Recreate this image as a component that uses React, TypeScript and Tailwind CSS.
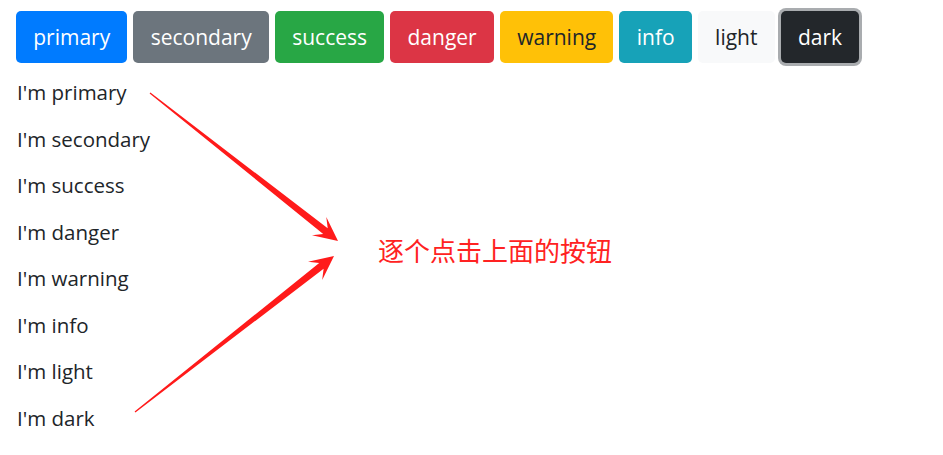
import React from "react";

type P = [number, number];

function arrowPoints(tail: P, tip: P): string {
  const dx = tip[0] - tail[0];
  const dy = tip[1] - tail[1];
  const len = Math.hypot(dx, dy);
  const ux = dx / len;
  const uy = dy / len;
  const px = -uy;
  const py = ux;
  const at = (along: number, perp: number): P => [
    tip[0] - ux * along + px * perp,
    tip[1] - uy * along + py * perp,
  ];
  const pts: P[] = [
    [tail[0] + px * 0.6, tail[1] + py * 0.6],
    at(16, 3.6),
    at(24, 11.5),
    [tip[0], tip[1]],
    at(24, -11.5),
    at(16, -3.6),
    [tail[0] - px * 0.6, tail[1] - py * 0.6],
  ];
  return pts.map((p) => `${p[0].toFixed(1)},${p[1].toFixed(1)}`).join(" ");
}

const buttons = [
  { label: "primary", cls: "bg-[#007bff] text-white" },
  { label: "secondary", cls: "bg-[#6c757d] text-white" },
  { label: "success", cls: "bg-[#28a745] text-white" },
  { label: "danger", cls: "bg-[#dc3545] text-white" },
  { label: "warning", cls: "bg-[#ffc107] text-[#212529]" },
  { label: "info", cls: "bg-[#17a2b8] text-white" },
  { label: "light", cls: "bg-[#f8f9fa] text-[#212529]" },
  { label: "dark", cls: "bg-[#23272b] text-white shadow-[0_0_0_3px_#a9acaf]" },
];

const lines = ["primary", "secondary", "success", "danger", "warning", "info", "light", "dark"];

export default function App() {
  return (
    <div
      className="relative w-[943px] h-[455px] bg-white overflow-hidden"
      style={{ fontFamily: '"Open Sans", "Noto Sans", sans-serif' }}
    >
      <div className="pl-[16px] pt-[11px]">
        <div className="flex gap-[6px]">
          {buttons.map((b) => (
            <button
              key={b.label}
              className={`h-[52px] px-[17.25px] rounded-[5px] text-[21px] leading-[30px] ${b.cls}`}
            >
              {b.label}
            </button>
          ))}
        </div>
        <div className="mt-[6px] flex flex-col text-[20.5px] text-[#212529]">
          {lines.map((l) => (
            <div key={l} className="leading-[46.5px] pl-[1px]">
              I'm {l}
            </div>
          ))}
        </div>
      </div>

      <div
        className="absolute left-[378px] top-[234px] text-[26px] leading-[32px] text-[#ff2222]"
        style={{ fontFamily: '"Noto Sans CJK SC", sans-serif' }}
      >
        逐个点击上面的按钮
      </div>

      <svg className="absolute left-0 top-0" width="943" height="455" viewBox="0 0 943 455">
        <polygon points={arrowPoints([150, 93], [338, 241])} fill="#ff1a1a" />
        <polygon points={arrowPoints([135, 412], [334, 256])} fill="#ff1a1a" />
      </svg>
    </div>
  );
}
